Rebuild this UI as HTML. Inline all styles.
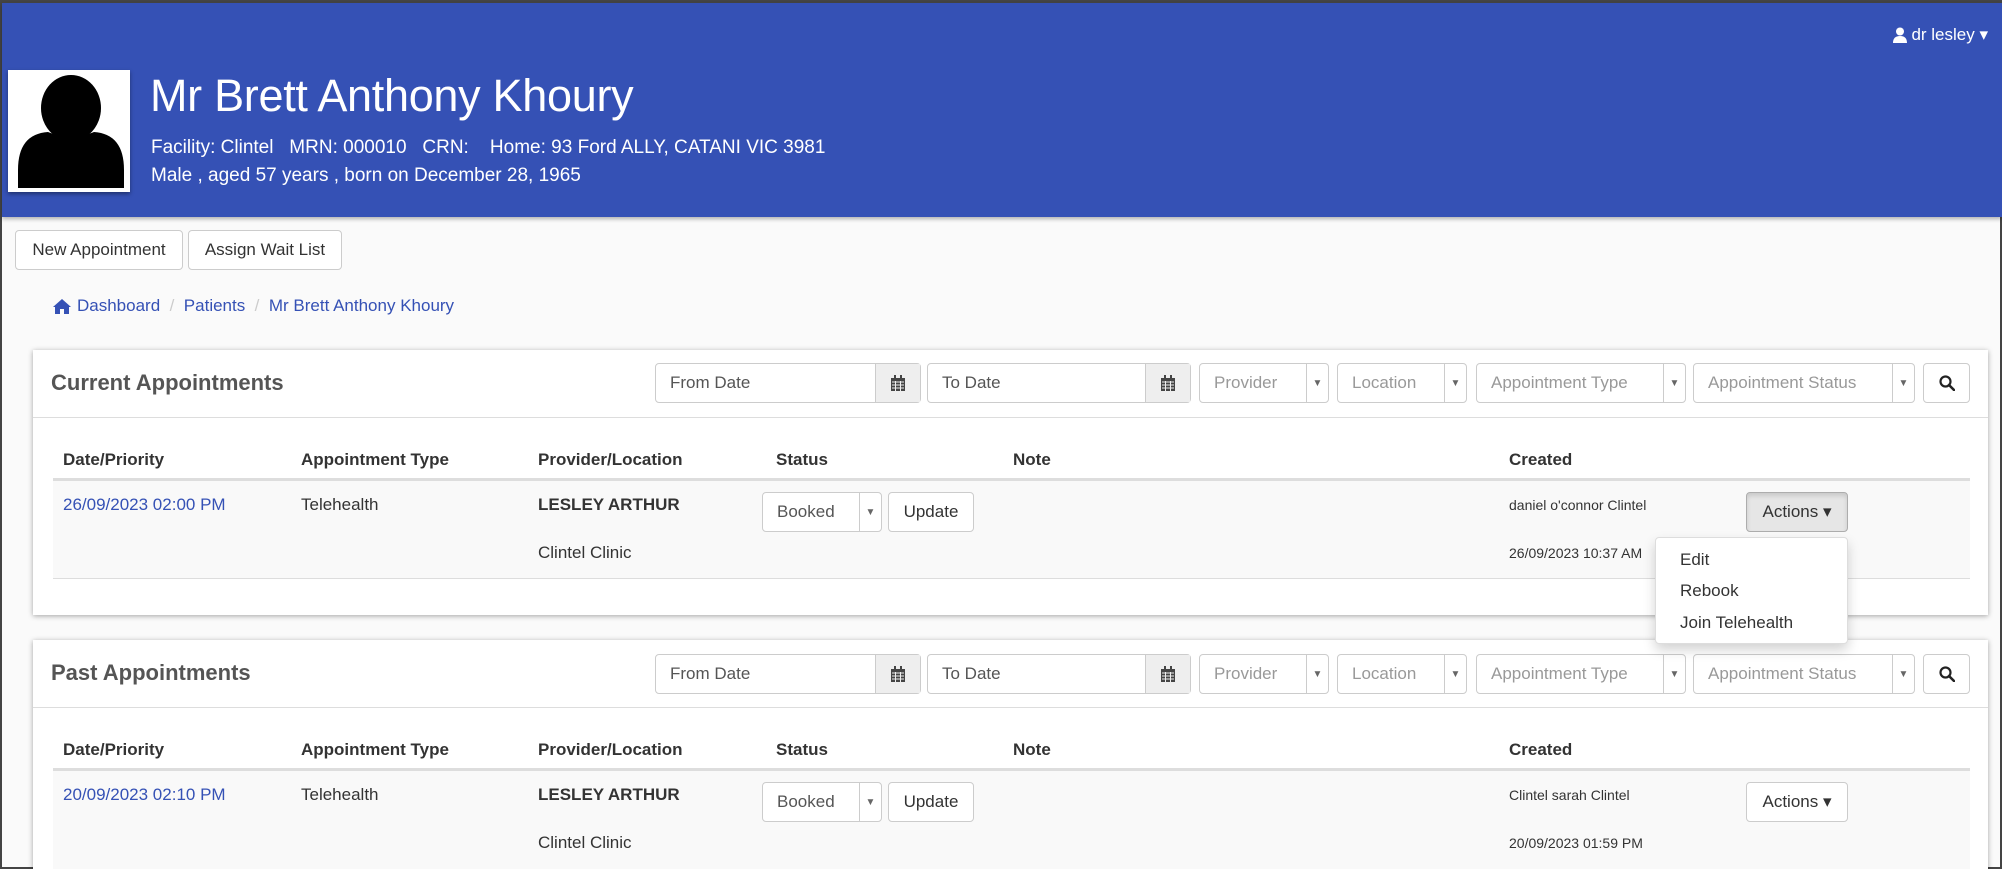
<!DOCTYPE html>
<html style="overflow:hidden;width:2002px;height:869px"><head><meta charset="utf-8"><style>
*{box-sizing:border-box;margin:0;padding:0}
body{width:2002px;height:869px;overflow:hidden;background:#fafafa;font-family:"Liberation Sans",sans-serif;color:#333;position:relative;border:2px solid #444;border-top:3px solid #444}
.abs{position:absolute}
.hdr{position:absolute;left:0;top:0;width:2000px;height:214px;background:#3551b5;box-shadow:0 2px 4px rgba(0,0,0,.3)}
.w{color:#fff}
.btn{position:absolute;background:#fff;border:1px solid #ccc;border-radius:4px;font-size:17px;color:#333;display:flex;align-items:center;justify-content:center}
.panel{position:absolute;left:31px;width:1955px;background:#fff;box-shadow:0 1px 5px rgba(0,0,0,.35)}
.ptitle{position:absolute;left:18px;font-size:22px;font-weight:bold;color:#555}
.inp{position:absolute;height:40px;border:1px solid #ccc;border-radius:4px;background:#fff;font-size:17px;color:#555;display:flex;align-items:center;padding-left:14px}
.inp.sel{color:#999}
.addon{position:absolute;right:0;top:0;bottom:0;width:45px;background:#eee;border-left:1px solid #ccc;display:flex;align-items:center;justify-content:center}
.caret{position:absolute;right:0;top:0;bottom:0;width:22px;border-left:1px solid #ccc;font-size:10px;color:#666;display:flex;align-items:center;justify-content:center}
.th{position:absolute;font-weight:bold;font-size:17px;color:#333}
.td{position:absolute;font-size:17px;color:#333}
.sm{position:absolute;font-size:14px;color:#333}
a{color:#3551b5;text-decoration:none}
</style></head><body>
<div class="hdr">
 <div class="abs w" style="right:14px;top:22px;font-size:17px;display:flex;align-items:center;gap:4px"><svg width="14" height="16" viewBox="0 0 14 16"><circle cx="7" cy="4.5" r="4" fill="#fff"/><path d="M0 16 Q0 9 7 9 Q14 9 14 16Z" fill="#fff"/></svg>dr lesley ▾</div>
 <div class="abs" style="left:6px;top:67px;width:122px;height:122px;background:#fff;box-shadow:0 2px 4px rgba(0,0,0,.4)">
  <svg width="122" height="122" viewBox="0 0 122 122"><ellipse cx="63" cy="38" rx="30" ry="33" fill="#000"/><path d="M10 118 L10 100 Q10 64 40 62 Q63 72 86 62 Q116 64 116 100 L116 118 Z" fill="#000"/></svg>
 </div>
 <div class="abs w" style="left:148px;top:67px;font-size:45px;letter-spacing:-0.3px">Mr Brett Anthony Khoury</div>
 <div class="abs w" style="left:149px;top:134px;font-size:19px">Facility: Clintel &nbsp;&nbsp;MRN: 000010 &nbsp;&nbsp;CRN: &nbsp;&nbsp;&nbsp;Home: 93 Ford ALLY, CATANI VIC 3981</div>
 <div class="abs w" style="left:149px;top:162px;font-size:19px">Male , aged 57 years , born on December 28, 1965</div>
</div>
<div class="btn" style="left:13px;top:227px;width:168px;height:40px">New Appointment</div>
<div class="btn" style="left:186px;top:227px;width:154px;height:40px">Assign Wait List</div>
<div class="abs" style="left:50px;top:293px;font-size:17px;display:flex;align-items:center"><svg width="20" height="17" viewBox="0 0 20 17" style="margin-right:5px"><path d="M10 1 L1 9 L3 9 L3 16 L8 16 L8 11 L12 11 L12 16 L17 16 L17 9 L19 9 Z" fill="#3551b5"/></svg><a>Dashboard</a><span style="color:#ccc">&nbsp;&nbsp;/&nbsp;&nbsp;</span><a>Patients</a><span style="color:#ccc">&nbsp;&nbsp;/&nbsp;&nbsp;</span><a>Mr Brett Anthony Khoury</a></div>

<!-- panel 1 -->
<div class="panel" style="top:347px;height:265px">
 <div class="ptitle" style="top:20px">Current Appointments</div>
 <div class="abs" style="left:0;right:0;top:67px;border-top:1px solid #ddd"></div>
 <div class="inp" style="left:622px;top:13px;width:266px">From Date<div class="addon"><svg width="14" height="16" viewBox="0 0 14 16"><rect x="0" y="3" width="14" height="13" fill="#444"/><rect x="3" y="0" width="2" height="4" fill="#444"/><rect x="9" y="0" width="2" height="4" fill="#444"/><path d="M1 7H13M1 10H13M1 13H13M4.5 6V16M9.5 6V16" stroke="#eee" stroke-width="1"/></svg></div></div>
 <div class="inp" style="left:894px;top:13px;width:264px">To Date<div class="addon"><svg width="14" height="16" viewBox="0 0 14 16"><rect x="0" y="3" width="14" height="13" fill="#444"/><rect x="3" y="0" width="2" height="4" fill="#444"/><rect x="9" y="0" width="2" height="4" fill="#444"/><path d="M1 7H13M1 10H13M1 13H13M4.5 6V16M9.5 6V16" stroke="#eee" stroke-width="1"/></svg></div></div>
 <div class="inp sel" style="left:1166px;top:13px;width:130px">Provider<div class="caret">▼</div></div>
 <div class="inp sel" style="left:1304px;top:13px;width:130px">Location<div class="caret">▼</div></div>
 <div class="inp sel" style="left:1443px;top:13px;width:210px">Appointment Type<div class="caret">▼</div></div>
 <div class="inp sel" style="left:1660px;top:13px;width:222px">Appointment Status<div class="caret">▼</div></div>
 <div class="inp" style="left:1890px;top:13px;width:47px;padding:0;justify-content:center"><svg width="16" height="16" viewBox="0 0 16 16"><circle cx="6.5" cy="6.5" r="5" fill="none" stroke="#222" stroke-width="2.2"/><path d="M10 10L15 15" stroke="#222" stroke-width="2.6" stroke-linecap="round"/></svg></div>
 <div class="th" style="left:30px;top:100px">Date/Priority</div>
 <div class="th" style="left:268px;top:100px">Appointment Type</div>
 <div class="th" style="left:505px;top:100px">Provider/Location</div>
 <div class="th" style="left:743px;top:100px">Status</div>
 <div class="th" style="left:980px;top:100px">Note</div>
 <div class="th" style="left:1476px;top:100px">Created</div>
 <div class="abs" style="left:20px;right:18px;top:128px;height:101px;background:#f9f9f9;border-top:3px solid #ddd;border-bottom:1px solid #ddd"></div>
 <div class="td" style="left:30px;top:145px"><a>26/09/2023 02:00 PM</a></div>
 <div class="td" style="left:268px;top:145px">Telehealth</div>
 <div class="td" style="left:505px;top:145px;font-weight:bold">LESLEY ARTHUR</div>
 <div class="td" style="left:505px;top:193px">Clintel Clinic</div>
 <div class="inp" style="left:729px;top:142px;width:120px">Booked<div class="caret">▼</div></div>
 <div class="btn" style="left:855px;top:142px;width:86px;height:40px">Update</div>
 <div class="sm" style="left:1476px;top:147px">daniel o'connor Clintel</div>
 <div class="sm" style="left:1476px;top:195px">26/09/2023 10:37 AM</div>
 <div class="btn" style="left:1713px;top:142px;width:102px;height:40px;background:#e6e6e6;border-color:#adadad;box-shadow:inset 0 3px 5px rgba(0,0,0,.125)">Actions ▾</div>
</div>

<!-- panel 2 -->
<div class="panel" style="top:637px;height:240px">
 <div class="ptitle" style="top:20px">Past Appointments</div>
 <div class="abs" style="left:0;right:0;top:67px;border-top:1px solid #ddd"></div>
 <div class="inp" style="left:622px;top:14px;width:266px">From Date<div class="addon"><svg width="14" height="16" viewBox="0 0 14 16"><rect x="0" y="3" width="14" height="13" fill="#444"/><rect x="3" y="0" width="2" height="4" fill="#444"/><rect x="9" y="0" width="2" height="4" fill="#444"/><path d="M1 7H13M1 10H13M1 13H13M4.5 6V16M9.5 6V16" stroke="#eee" stroke-width="1"/></svg></div></div>
 <div class="inp" style="left:894px;top:14px;width:264px">To Date<div class="addon"><svg width="14" height="16" viewBox="0 0 14 16"><rect x="0" y="3" width="14" height="13" fill="#444"/><rect x="3" y="0" width="2" height="4" fill="#444"/><rect x="9" y="0" width="2" height="4" fill="#444"/><path d="M1 7H13M1 10H13M1 13H13M4.5 6V16M9.5 6V16" stroke="#eee" stroke-width="1"/></svg></div></div>
 <div class="inp sel" style="left:1166px;top:14px;width:130px">Provider<div class="caret">▼</div></div>
 <div class="inp sel" style="left:1304px;top:14px;width:130px">Location<div class="caret">▼</div></div>
 <div class="inp sel" style="left:1443px;top:14px;width:210px">Appointment Type<div class="caret">▼</div></div>
 <div class="inp sel" style="left:1660px;top:14px;width:222px">Appointment Status<div class="caret">▼</div></div>
 <div class="inp" style="left:1890px;top:14px;width:47px;padding:0;justify-content:center"><svg width="16" height="16" viewBox="0 0 16 16"><circle cx="6.5" cy="6.5" r="5" fill="none" stroke="#222" stroke-width="2.2"/><path d="M10 10L15 15" stroke="#222" stroke-width="2.6" stroke-linecap="round"/></svg></div>
 <div class="th" style="left:30px;top:100px">Date/Priority</div>
 <div class="th" style="left:268px;top:100px">Appointment Type</div>
 <div class="th" style="left:505px;top:100px">Provider/Location</div>
 <div class="th" style="left:743px;top:100px">Status</div>
 <div class="th" style="left:980px;top:100px">Note</div>
 <div class="th" style="left:1476px;top:100px">Created</div>
 <div class="abs" style="left:20px;right:18px;top:128px;height:120px;background:#f9f9f9;border-top:3px solid #ddd"></div>
 <div class="td" style="left:30px;top:145px"><a>20/09/2023 02:10 PM</a></div>
 <div class="td" style="left:268px;top:145px">Telehealth</div>
 <div class="td" style="left:505px;top:145px;font-weight:bold">LESLEY ARTHUR</div>
 <div class="td" style="left:505px;top:193px">Clintel Clinic</div>
 <div class="inp" style="left:729px;top:142px;width:120px">Booked<div class="caret">▼</div></div>
 <div class="btn" style="left:855px;top:142px;width:86px;height:40px">Update</div>
 <div class="sm" style="left:1476px;top:147px">Clintel sarah Clintel</div>
 <div class="sm" style="left:1476px;top:195px">20/09/2023 01:59 PM</div>
 <div class="btn" style="left:1713px;top:142px;width:102px;height:40px">Actions ▾</div>
</div>

<!-- dropdown -->
<div class="abs" style="left:1653px;top:534px;width:193px;height:107px;background:#fff;border:1px solid #ddd;border-radius:4px;box-shadow:0 6px 12px rgba(0,0,0,.175);font-size:17px;color:#333">
 <div class="abs" style="left:24px;top:12px">Edit</div>
 <div class="abs" style="left:24px;top:43px">Rebook</div>
 <div class="abs" style="left:24px;top:75px">Join Telehealth</div>
</div>
</body></html>
